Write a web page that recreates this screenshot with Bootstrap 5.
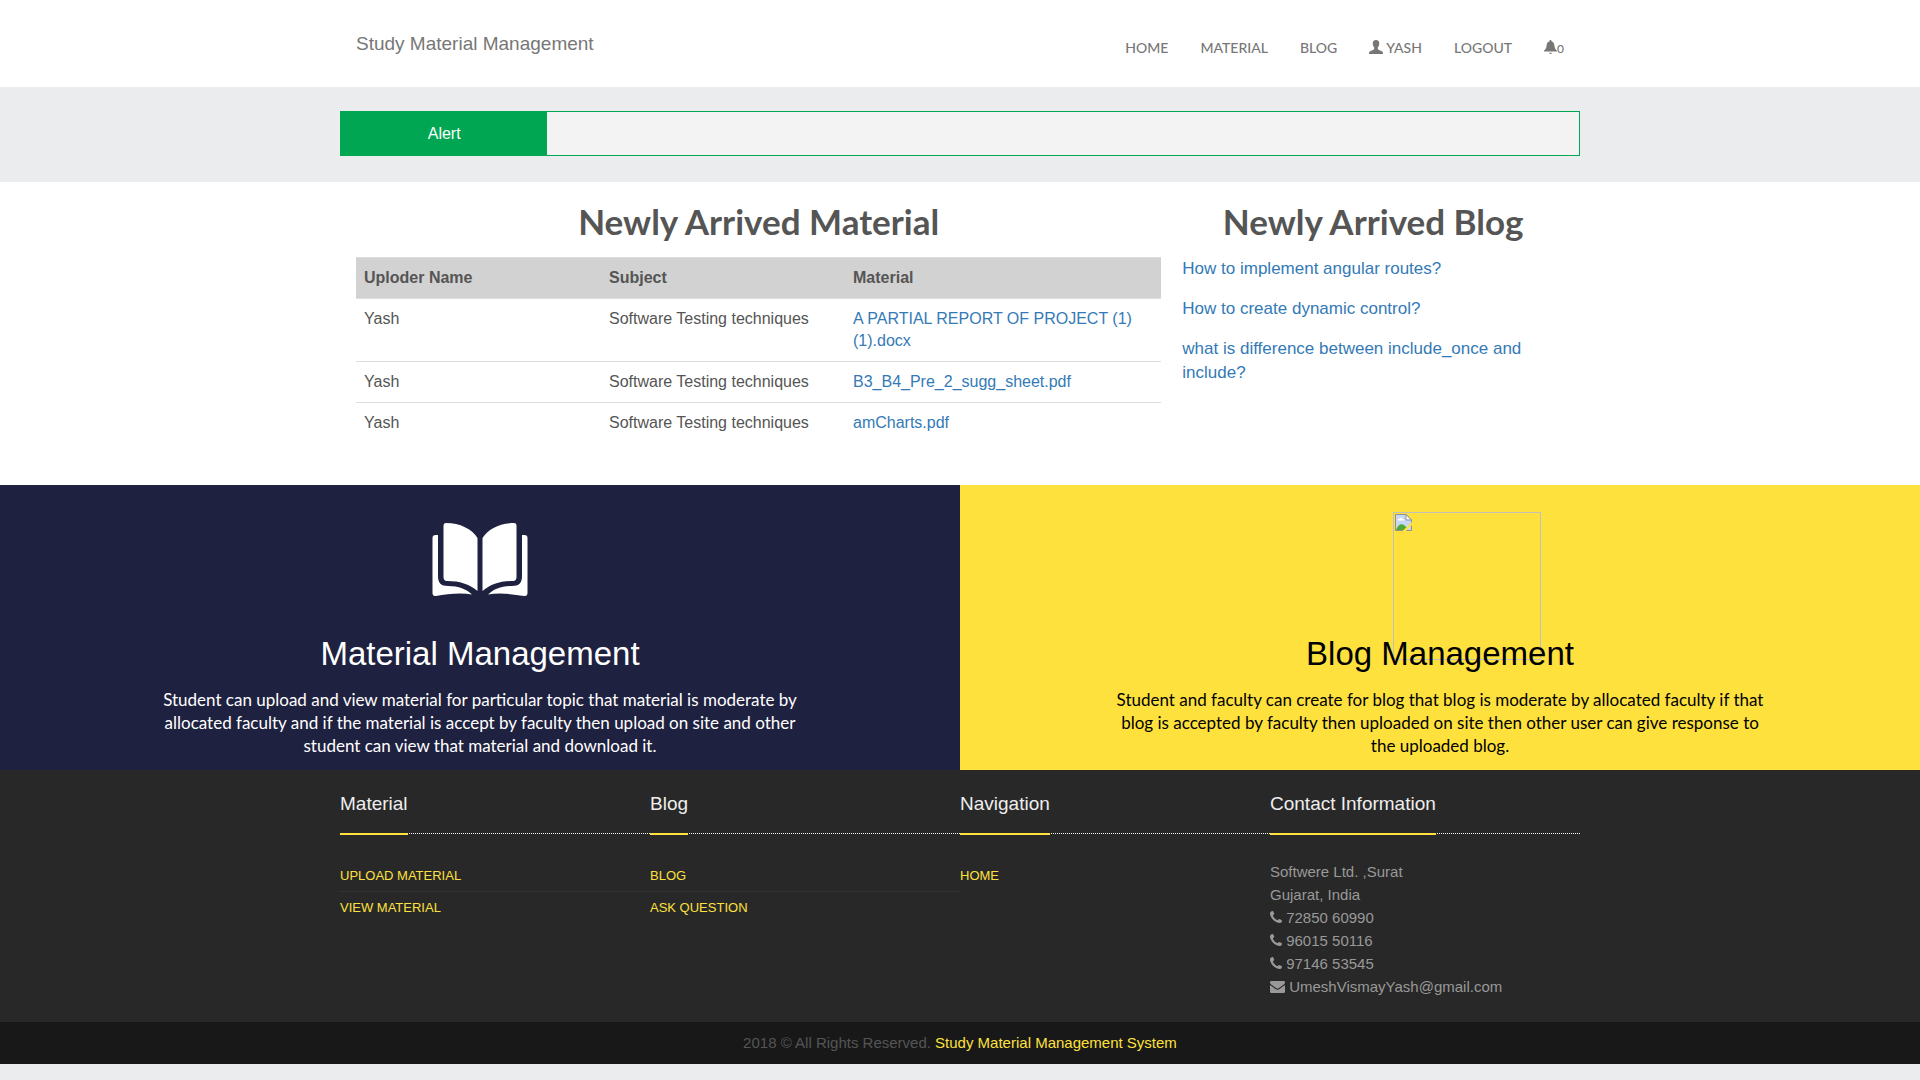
<!DOCTYPE html>
<html lang="en">
<head>
<meta charset="utf-8">
<meta name="viewport" content="width=device-width, initial-scale=1">
<title>Study Material Management</title>
<link href="https://cdn.jsdelivr.net/npm/bootstrap@5.3.0/dist/css/bootstrap.min.css" rel="stylesheet">
<style>
  body { font-family: "Liberation Sans", Arial, sans-serif; font-size: 16px; line-height: 23px; color: #555; background: #ebecee; }
  a { text-decoration: none; color: #337ab7; }
  svg { fill: currentColor; }
  .page-wrap { width: 100%; max-width: 1240px; margin: 0 auto; }
  .site-head { min-height: 87px; }
  .site-head .navbar-brand { font-size: 19px; line-height: 23px; color: #777; padding: 0; margin: 0; }
  .site-head .navbar-nav { padding-top: 10px; }
  .site-head .navbar-nav .nav-link { font-family: Lato, sans-serif; font-size: 14px; font-weight: 500; line-height: 24px; color: #777; padding: 8px 16px; }
  .nav-icon { vertical-align: -1px; }
  .bell-count { font-size: 12px; }
  .alert-strip { padding: 24px 0 26px; }
  .alert-box { border: 1px solid #00a651; background: #f3f3f3; min-height: 45px; }
  .alert-tag { background: #00a651; color: #fff; }
  .section-title { font-family: Lato, sans-serif; font-weight: 700; font-size: 35px; line-height: 36px; color: #555; margin: 0; text-align: center; }
  .arrivals { padding: 21px 16px 42px; }
  .arrivals-table { margin: 18px 0 0; color: #555; line-height: 22px; }
  .arrivals-table > :not(caption) > * > * { padding: 9px 8px; border: 0; border-top: 1px solid #ddd; background: transparent; color: #555; box-shadow: none; }
  .arrivals-table > thead > tr > th { background: #d2d2d2; }
  .col-name { width: 245px; }
  .col-subject { width: 244px; }
  .blog-col { padding-left: 21px; }
  .blog-links { padding-top: 18px; }
  .blog-links a { display: block; font-size: 17px; line-height: 24px; margin-bottom: 16px; }
  .feature { min-height: 285px; padding: 27px 16px 11px; line-height: 23px; }
  .feature-material { background: #1f2140; color: #fff; }
  .feature-blog { background: #fee13d; color: #000; }
  .feature-art { height: 122px; }
  .feature-blog .feature-art { padding-left: 54px; }
  .feature-name { font-size: 33px; line-height: 40px; margin: 0 0 14px; }
  .feature-text { font-family: Lato, sans-serif; font-size: 17px; max-width: 660px; margin: 0 auto; }
  .site-foot { background: #282828; color: #999; font-size: 15px; padding-bottom: 24px; }
  .foot-head { border-bottom: 1px dotted #fff; margin-bottom: 26px; height: 64px; }
  .foot-head h2 { display: inline-block; font-size: 19px; line-height: 23px; color: #eee; margin: 0; padding: 22px 0 18px; border-bottom: 2px solid #fee13d; }
  .foot-links a { display: block; color: #fee13d; font-size: 13px; line-height: 20px; padding: 6px 0 5px; }
  .foot-links li + li { border-top: 1px solid #333; }
  .foot-bar { background: #181818; color: #555; font-size: 15px; padding: 9px 0 10px; }
  .foot-bar a { color: #fee13d; }
</style>
</head>
<body>
<header class="bg-white">
  <nav class="navbar navbar-expand site-head page-wrap py-0 ps-3 pe-0" aria-label="Main">
    <a class="navbar-brand" href="#">Study Material Management</a>
    <ul class="navbar-nav ms-auto">
      <li class="nav-item"><a class="nav-link" href="#">HOME</a></li>
      <li class="nav-item"><a class="nav-link" href="#">MATERIAL</a></li>
      <li class="nav-item"><a class="nav-link" href="#">BLOG</a></li>
      <li class="nav-item"><a class="nav-link" href="#"><svg class="nav-icon" width="14" height="14" viewBox="0 0 14 14" aria-hidden="true"><path d="M7 0C4.900 0 3.600 1.400 3.700 3.400C3.800 5.400 4.600 6.600 5.200 7.400V9.200C4.400 10 1.600 10.700.6 11.700C0 12.300 0 13 0 14H14C14 13 14 12.300 13.400 11.700C12.400 10.700 9.600 10 8.800 9.200V7.400C9.400 6.600 10.200 5.400 10.300 3.400C10.400 1.400 9.100 0 7 0Z"/></svg> YASH</a></li>
      <li class="nav-item"><a class="nav-link" href="#">LOGOUT</a></li>
      <li class="nav-item"><a class="nav-link" href="#"><svg class="nav-icon" width="13" height="14" viewBox="0 0 13 14" aria-hidden="true"><path d="M6.500 0C5.900 0 5.500.5 5.500 1.200C3.500 1.800 2.900 3.500 2.600 5.500C2.300 8 1.900 8.900.9 9.800C.2 10.400 0 10.700 0 11.400H13C13 10.700 12.800 10.400 12.100 9.800C11.100 8.900 10.700 8 10.400 5.500C10.100 3.500 9.500 1.800 7.500 1.200C7.500.5 7.100 0 6.500 0ZM5 12.800C5 13.500 5.600 14 6.500 14S8 13.500 8 12.800Z"/></svg><span class="bell-count">0</span></a></li>
    </ul>
  </nav>
</header>

<section class="alert-strip">
  <div class="page-wrap">
    <div class="alert-box d-flex">
      <div class="alert-tag col-2 d-flex align-items-center justify-content-center">Alert</div>
    </div>
  </div>
</section>

<main>
  <section class="bg-white">
    <div class="page-wrap arrivals">
      <div class="row g-0">
        <div class="col-8">
          <h1 class="section-title">Newly Arrived Material</h1>
          <table class="table arrivals-table">
            <thead>
              <tr><th class="col-name" scope="col">Uploder Name</th><th class="col-subject" scope="col">Subject</th><th scope="col">Material</th></tr>
            </thead>
            <tbody>
              <tr><td>Yash</td><td>Software Testing techniques</td><td><a href="#">A PARTIAL REPORT OF PROJECT (1) (1).docx</a></td></tr>
              <tr><td>Yash</td><td>Software Testing techniques</td><td><a href="#">B3_B4_Pre_2_sugg_sheet.pdf</a></td></tr>
              <tr><td>Yash</td><td>Software Testing techniques</td><td><a href="#">amCharts.pdf</a></td></tr>
            </tbody>
          </table>
        </div>
        <div class="col-4 blog-col">
          <h1 class="section-title">Newly Arrived Blog</h1>
          <div class="blog-links">
            <a href="#">How to implement angular routes?</a>
            <a href="#">How to create dynamic control?</a>
            <a href="#">what is difference between include_once and include?</a>
          </div>
        </div>
      </div>
    </div>
  </section>

  <section class="row g-0 text-center">
    <div class="col-6 feature feature-material">
      <div class="feature-art d-flex justify-content-center align-items-start">
        <svg class="mt-2" width="96" height="78" viewBox="0 0 96 78" aria-hidden="true">
          <path d="M14 3C28 3 40 9 45.500 18V71C37 64 28 61 15 61Q11.500 61 11.500 57V6Q11.500 3 14 3Z"/>
          <path d="M82 3C68 3 56 9 50.500 18V71C59 64 68 61 81 61Q84.500 61 84.500 57V6Q84.500 3 82 3Z"/>
          <path d="M3.500 15H6V56C6 63 9 66 16 66C27 66 34 69 40 74.500C29 72.500 15 74 4 76Q.5 76.500.5 73V18Q.5 15 3.500 15Z"/>
          <path d="M92.500 15H90V56C90 63 87 66 80 66C69 66 62 69 56 74.500C67 72.500 81 74 92 76Q95.500 76.500 95.500 73V18Q95.500 15 92.500 15Z"/>
        </svg>
      </div>
      <h2 class="feature-name">Material Management</h2>
      <p class="feature-text">Student can upload and view material for particular topic that material is moderate by allocated faculty and if the material is accept by faculty then upload on site and other student can view that material and download it.</p>
    </div>
    <div class="col-6 feature feature-blog">
      <div class="feature-art d-flex justify-content-center align-items-start">
        <svg class="flex-shrink-0" width="148" height="148" viewBox="0 0 148 148" role="img" aria-label="Blog">
          <rect x=".5" y=".5" width="147" height="147" fill="none" stroke="#c0c0c0"/>
          <path d="M2.500 2.500H13L18.500 8V18.500H2.500Z" fill="#c6d8f5" stroke="#909090"/>
          <path d="M13 2.500V8H18.500Z" fill="#fff" stroke="#909090"/>
          <path d="M4.500 8.500Q4.500 6.500 6.500 6.500Q7.500 4.500 9 6.500Q11 6.500 11 8.500Z" fill="#fff"/>
          <path d="M3 18C5 12.500 8 11 11 13L13.500 15.500L11 18Z" fill="#52a833"/>
          <path d="M9.500 19H13L19 13V10Z" fill="#fee13d"/>
        </svg>
      </div>
      <h2 class="feature-name position-relative">Blog Management</h2>
      <p class="feature-text">Student and faculty can create for blog that blog is moderate by allocated faculty if that blog is accepted by faculty then uploaded on site then other user can give response to the uploaded blog.</p>
    </div>
  </section>
</main>

<footer>
  <div class="site-foot">
    <div class="page-wrap">
      <div class="row g-0">
        <div class="col-3">
          <div class="foot-head"><h2>Material</h2></div>
          <ul class="list-unstyled foot-links m-0"><li><a href="#">UPLOAD MATERIAL</a></li><li><a href="#">VIEW MATERIAL</a></li></ul>
        </div>
        <div class="col-3">
          <div class="foot-head"><h2>Blog</h2></div>
          <ul class="list-unstyled foot-links m-0"><li><a href="#">BLOG</a></li><li><a href="#">ASK QUESTION</a></li></ul>
        </div>
        <div class="col-3">
          <div class="foot-head"><h2>Navigation</h2></div>
          <ul class="list-unstyled foot-links m-0"><li><a href="#">HOME</a></li></ul>
        </div>
        <div class="col-3">
          <div class="foot-head"><h2>Contact Information</h2></div>
          <address class="m-0">Softwere Ltd. ,Surat<br>Gujarat, India<br>
            <svg class="align-baseline" width="12" height="12" viewBox="0 0 12 12" aria-hidden="true"><path id="handset" d="M2.600.1C3.100 0 3.200.3 3.600 1.200C4 2 4.300 2.500 4.200 2.900C4 3.500 2.800 3.900 2.900 4.500C3.100 5.800 5.800 8.800 7.300 9.100C7.900 9.200 8.500 8 9 7.900C9.500 7.800 11.500 8.900 11.800 9.200C12.200 9.600 11.700 11 11.200 11.400C10.400 11.900 9.200 12.100 8.100 11.800C4.400 10.700 1 7 .1 3.700C-.2 2.500.1 1.300.7.700C1.200.3 2 .2 2.600.1Z"/></svg> 72850 60990<br>
            <svg class="align-baseline" width="12" height="12" viewBox="0 0 12 12" aria-hidden="true"><use href="#handset"/></svg> 96015 50116<br>
            <svg class="align-baseline" width="12" height="12" viewBox="0 0 12 12" aria-hidden="true"><use href="#handset"/></svg> 97146 53545<br>
            <svg class="nav-icon" width="15" height="12" viewBox="0 0 15 12" aria-hidden="true"><path d="M0 1.300Q0 0 1.300 0H13.700Q15 0 15 1.300C15 2.400 14.300 3.100 13.500 3.700L9 6.900Q7.500 8 6 6.900L1.500 3.700C.7 3.100 0 2.400 0 1.300ZM0 4L5.500 8Q7.500 9.300 9.500 8L15 4V10.700Q15 12 13.700 12H1.300Q0 12 0 10.700Z"/></svg> UmeshVismayYash@gmail.com
          </address>
        </div>
      </div>
    </div>
  </div>
  <div class="foot-bar text-center">2018 © All Rights Reserved. <a href="#">Study Material Management System</a></div>
</footer>
<script src="https://cdn.jsdelivr.net/npm/bootstrap@5.3.0/dist/js/bootstrap.bundle.min.js"></script>
</body>
</html>
